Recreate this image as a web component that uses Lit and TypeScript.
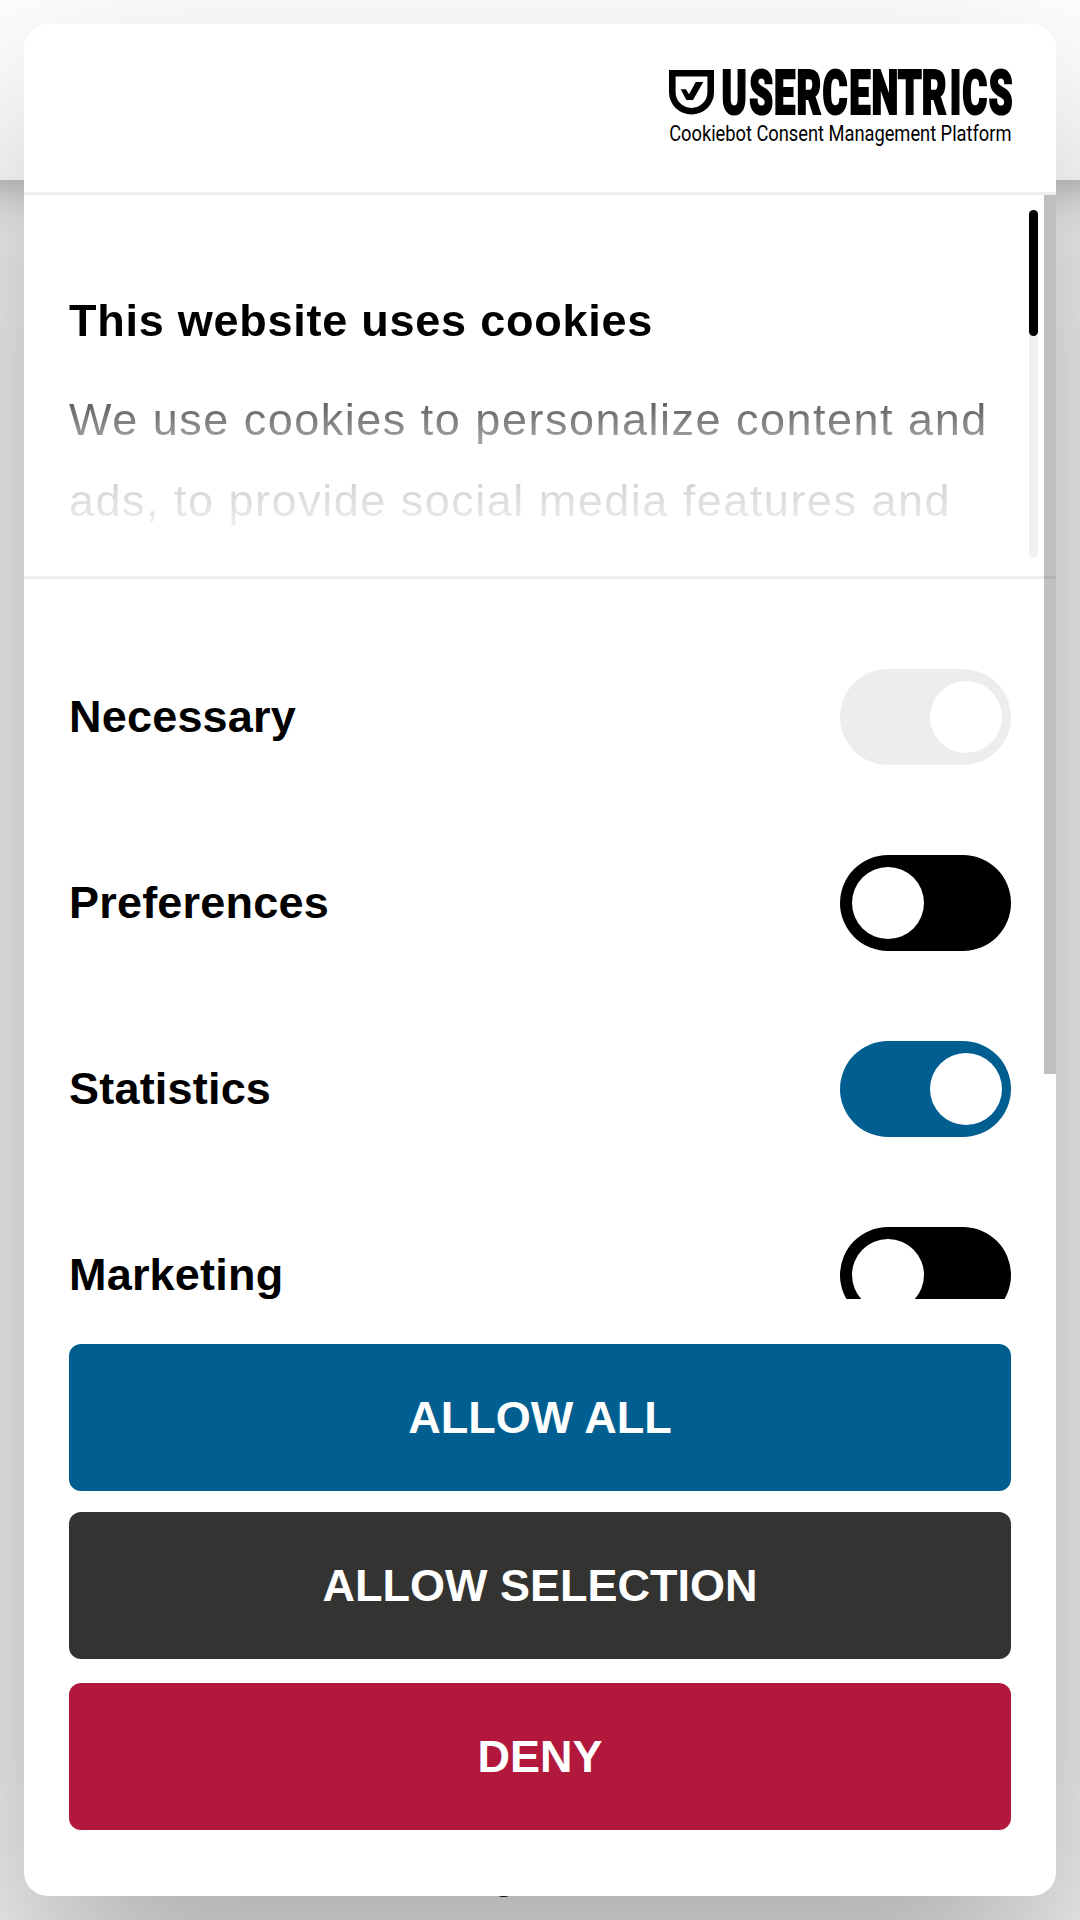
import { LitElement, html, css } from "lit";
import { customElement, property } from "lit/decorators.js";
import { classMap } from "lit/directives/class-map.js";

@customElement("consent-toggle")
class ConsentToggle extends LitElement {
  @property({ type: Boolean }) on = false;
  @property({ type: Boolean }) locked = false;

  static styles = css`
    :host { display: block; flex: none; }
    .track {
      display: flex;
      box-sizing: border-box;
      width: 171px;
      height: 96px;
      padding: 12px 9px 12px 12px;
      border-radius: 48px;
      background: #000;
    }
    .track.on { justify-content: flex-end; background: #005e91; }
    .track.locked { background: #ededed; }
    .knob { width: 72px; height: 72px; border-radius: 50%; background: #fff; }
  `;

  render() {
    return html`<div class=${classMap({ track: true, on: this.on, locked: this.locked })}>
      <div class="knob"></div>
    </div>`;
  }
}

@customElement("brand-logo")
class BrandLogo extends LitElement {
  static styles = css`
    :host { display: block; }
    svg { display: block; overflow: visible; }
    .word { font: 900 60.5px Roboto, sans-serif; stroke: #000; stroke-width: 2.2; }
    .tag { font: 400 21.3px Roboto, sans-serif; }
  `;

  render() {
    return html`<svg width="342" height="78" viewBox="0 0 342 78">
      <path fill-rule="evenodd" d="M0 0H45V22.2a22.5 22.3 0 0 1-45 0ZM6.6 6.6V22.2a15.9 15.8 0 0 0 31.8 0V6.6Z"/>
      <path d="M11.7 19.3H16.9L20 24.2L26.8 12H34.3L24 30H17.4Z"/>
      <g transform="translate(0 43.6) scale(0.63 1)">
        <text class="word" x="83.5 127.5 166.5 202.5 243.5 286 321.5 363 401 445.5 465.5 507.5" y="0">USERCENTRICS</text>
      </g>
      <g transform="translate(0.2 71.4) scale(0.86 1)">
        <text class="tag" x="0" y="0" textLength="398" lengthAdjust="spacing">Cookiebot Consent Management Platform</text>
      </g>
    </svg>`;
  }
}

@customElement("app-root")
class AppRoot extends LitElement {
  static styles = css`
    :host {
      display: block;
      position: relative;
      box-sizing: border-box;
      width: 1080px;
      height: 1920px;
      padding: 24px;
      overflow: hidden;
      background: #f3f3f3;
      color: #000;
      font-family: "Liberation Sans", Arial, sans-serif;
      font-size: 45px;
    }
    .topbar {
      position: absolute;
      left: -60px;
      right: -60px;
      top: 0;
      height: 180px;
      background: #fff;
      box-shadow: 0 0 50px rgba(0, 0, 0, 0.38);
    }
    .speck {
      position: absolute;
      left: 495px;
      top: 1886px;
      width: 17px;
      height: 11px;
      border-radius: 50%;
      background: #111;
    }
    .dialog {
      position: relative;
      display: flex;
      flex-direction: column;
      height: 1872px;
      border-radius: 24px;
      background: #fff;
      box-shadow: 0 96px 204px rgba(0, 0, 0, 0.3);
    }
    .header {
      display: flex;
      justify-content: flex-end;
      flex: none;
      box-sizing: border-box;
      height: 171px;
      padding: 46px 45px 0;
      border-bottom: 3px solid #eee;
    }
    .scroll {
      position: relative;
      flex: none;
      height: 1104px;
      overflow: hidden;
    }
    .intro {
      position: relative;
      box-sizing: border-box;
      height: 384px;
      border-bottom: 3px solid #eee;
    }
    .fade {
      box-sizing: border-box;
      height: 381px;
      padding: 99px 45px 0;
      white-space: nowrap;
      -webkit-mask-image: linear-gradient(#000 38%, rgba(0,0,0,.64) 54%, rgba(0,0,0,.40) 63%, rgba(0,0,0,.17) 76%, rgba(0,0,0,.09) 84.5%, transparent);
      mask-image: linear-gradient(#000 38%, rgba(0,0,0,.64) 54%, rgba(0,0,0,.40) 63%, rgba(0,0,0,.17) 76%, rgba(0,0,0,.09) 84.5%, transparent);
    }
    .title { margin: 0 0 31px; font-size: 45px; line-height: 54px; letter-spacing: 0.75px; }
    .copy { margin: 0; line-height: 81px; letter-spacing: 1.5px; }
    .rail {
      position: absolute;
      right: 18px;
      top: 15px;
      width: 9px;
      height: 348px;
      border-radius: 5px;
      background: #f1f1f1;
    }
    .thumb { height: 126px; border-radius: 5px; background: #000; }
    .bar {
      position: absolute;
      right: 0;
      top: 0;
      width: 12px;
      height: 879px;
      background: rgba(0, 0, 0, 0.25);
    }
    .rows { display: flex; flex-direction: column; gap: 90px; padding: 90px 45px 0; }
    .row {
      display: flex;
      align-items: center;
      justify-content: space-between;
      font-weight: 700;
      letter-spacing: 0.2px;
    }
    .footer { display: flex; flex-direction: column; padding: 45px 45px 0; }
    .btn {
      box-sizing: border-box;
      height: 147px;
      margin: 0 0 21px;
      padding: 1px 0 0;
      border: 0;
      border-radius: 12px;
      color: #fff;
      background: #005e91;
      font: 700 45px/146px "Liberation Sans", Arial, sans-serif;
      text-align: center;
    }
    .btn.selection { background: #333331; margin-bottom: 24px; }
    .btn.deny { background: #b1183b; margin-bottom: 0; }
  `;

  private categories = [
    { name: "Necessary", on: true, locked: true },
    { name: "Preferences", on: false, locked: false },
    { name: "Statistics", on: true, locked: false },
    { name: "Marketing", on: false, locked: false },
  ];

  render() {
    return html`
      <div class="topbar"></div>
      <div class="speck"></div>
      <div class="dialog">
        <div class="header"><brand-logo></brand-logo></div>
        <div class="scroll">
          <div class="intro">
            <div class="fade">
              <h2 class="title">This website uses cookies</h2>
              <p class="copy">We use cookies to personalize content and<br />ads, to provide social media features and</p>
            </div>
            <div class="rail"><div class="thumb"></div></div>
          </div>
          <div class="rows">
            ${this.categories.map(
              (c) => html`<div class="row">
                <span>${c.name}</span>
                <consent-toggle ?on=${c.on} ?locked=${c.locked}></consent-toggle>
              </div>`
            )}
          </div>
          <div class="bar"></div>
        </div>
        <div class="footer">
          <button class="btn">ALLOW ALL</button>
          <button class="btn selection">ALLOW SELECTION</button>
          <button class="btn deny">DENY</button>
        </div>
      </div>
    `;
  }
}
